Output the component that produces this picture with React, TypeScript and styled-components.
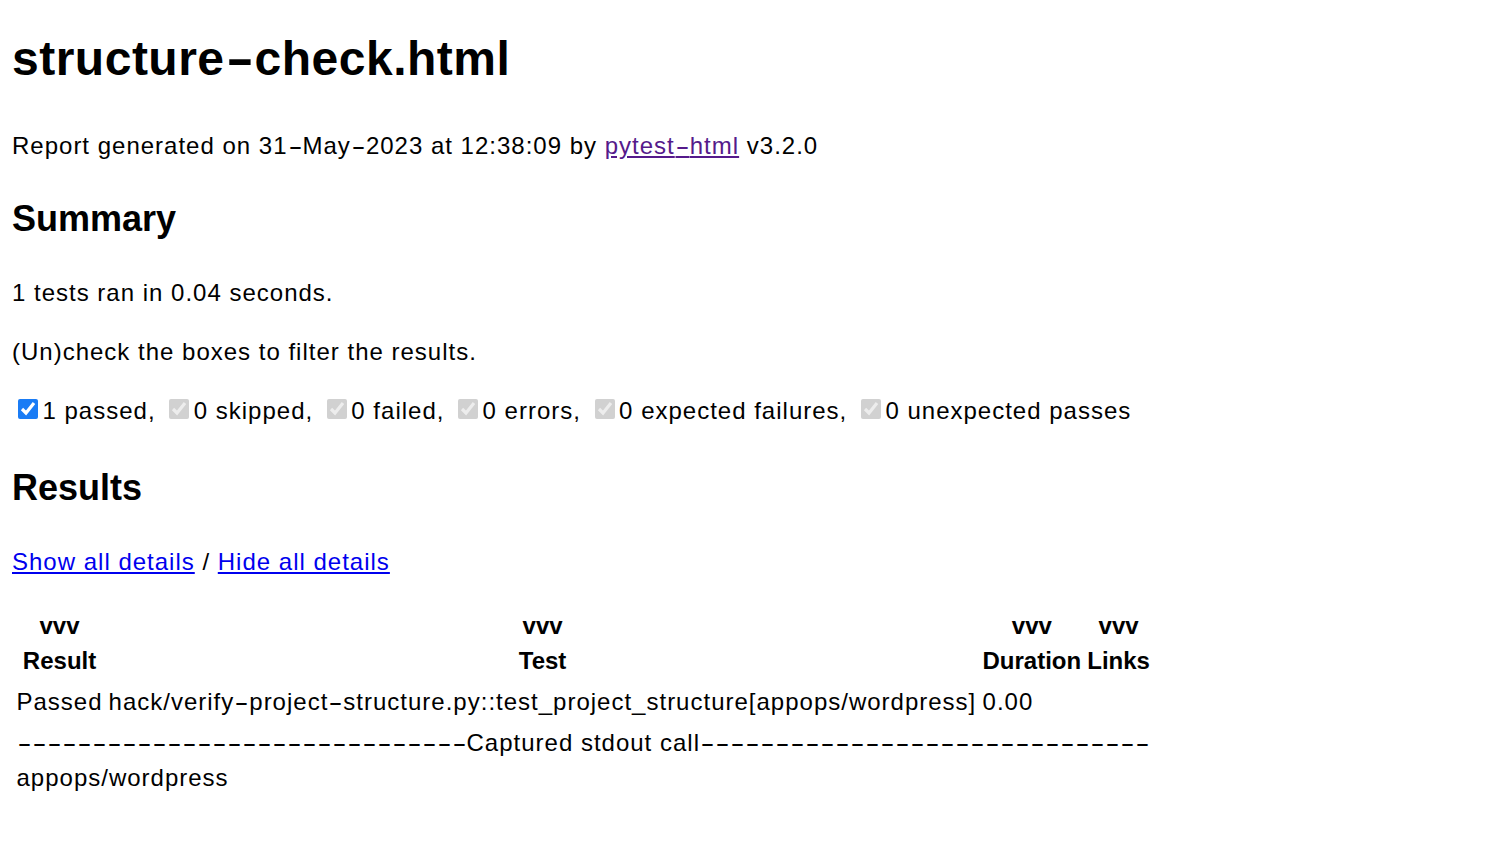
import React from "react";
import styled, { createGlobalStyle } from "styled-components";

const GlobalStyle = createGlobalStyle`
  html, body { background: #ffffff; }
  body {
    margin: 12px;
    font-family: "Liberation Sans", Arial, Helvetica, sans-serif;
    font-size: 24px;
    line-height: 35px;
    letter-spacing: 1px;
    color: #000000;
  }
`;

const Title = styled.h1`
  font-size: 48px;
  line-height: 64px;
  font-weight: bold;
  letter-spacing: 0.5px;
  margin: 15px 0 37px;
`;

const SectionTitle = styled.h2`
  font-size: 36px;
  line-height: 52px;
  font-weight: bold;
  letter-spacing: 0;
  margin: 30px 0;
`;

const Para = styled.p`
  margin: 24px 0;
`;

const FilterRow = styled(Para)`
  margin-bottom: 34px;
`;

const Link = styled.a<{ $visited?: boolean }>`
  color: ${(p) => (p.$visited ? "#551a8b" : "#0000ee")};
  text-decoration: underline;
  cursor: pointer;
`;

const Dash = styled.span`
  display: inline-block;
  width: 0.625em;
  text-align: center;
  letter-spacing: 0;
  transform: scaleX(1.75);
  text-decoration: inherit;
`;

const Filter = styled.input`
  width: 20px;
  height: 20px;
  margin: 4.5px 4.5px 4.5px 6px;
  accent-color: #1a7cf5;
  vertical-align: baseline;
`;

const ResultsTable = styled.table`
  border-spacing: 3px;
  border-collapse: separate;
  margin: 0;
`;

const HeadCell = styled.th`
  padding: 1.5px;
  font-weight: bold;
  letter-spacing: 0;
  text-align: center;
  vertical-align: middle;
`;

const SortIcon = styled.div`
  font-weight: bold;
`;

const Cell = styled.td`
  padding: 1.5px;
  text-align: left;
  vertical-align: middle;
`;

const Log = styled.div``;

const Hy: React.FC<{ text: string }> = ({ text }) => {
  const parts = text.split("-");
  return (
    <>
      {parts.map((part, i) => (
        <React.Fragment key={i}>
          {part}
          {i < parts.length - 1 && <Dash>-</Dash>}
        </React.Fragment>
      ))}
    </>
  );
};

const filters: { label: string; checked: boolean; disabled: boolean; last?: boolean }[] = [
  { label: "1 passed", checked: true, disabled: false },
  { label: "0 skipped", checked: true, disabled: true },
  { label: "0 failed", checked: true, disabled: true },
  { label: "0 errors", checked: true, disabled: true },
  { label: "0 expected failures", checked: true, disabled: true },
  { label: "0 unexpected passes", checked: true, disabled: true, last: true },
];

const columns = ["Result", "Test", "Duration", "Links"];

export default function App() {
  const dashes = "-".repeat(30);
  return (
    <>
      <GlobalStyle />
      <Title>
        <Hy text="structure-check.html" />
      </Title>
      <Para>
        Report generated on <Hy text="31-May-2023" /> at 12:38:09 by{" "}
        <Link $visited href="#">
          <Hy text="pytest-html" />
        </Link>{" "}
        v3.2.0
      </Para>
      <SectionTitle>Summary</SectionTitle>
      <Para>1 tests ran in 0.04 seconds.</Para>
      <Para>(Un)check the boxes to filter the results.</Para>
      <FilterRow>
        {filters.map((f) => (
          <React.Fragment key={f.label}>
            <Filter type="checkbox" defaultChecked={f.checked} disabled={f.disabled} />
            <span>{f.label}</span>
            {f.last ? "" : ", "}
          </React.Fragment>
        ))}
      </FilterRow>
      <SectionTitle>Results</SectionTitle>
      <Para>
        <Link href="#">Show all details</Link> / <Link href="#">Hide all details</Link>
      </Para>
      <ResultsTable>
        <thead>
          <tr>
            {columns.map((c) => (
              <HeadCell key={c}>
                <SortIcon>vvv</SortIcon>
                {c}
              </HeadCell>
            ))}
          </tr>
        </thead>
        <tbody>
          <tr>
            <Cell>Passed</Cell>
            <Cell>
              <Hy text="hack/verify-project-structure.py::test_project_structure[appops/wordpress]" />
            </Cell>
            <Cell>0.00</Cell>
            <Cell></Cell>
          </tr>
          <tr>
            <Cell colSpan={4}>
              <Log>
                <Hy text={`${dashes}Captured stdout call${dashes}`} />
                <br />
                appops/wordpress
                <br />
              </Log>
            </Cell>
          </tr>
        </tbody>
      </ResultsTable>
    </>
  );
}
